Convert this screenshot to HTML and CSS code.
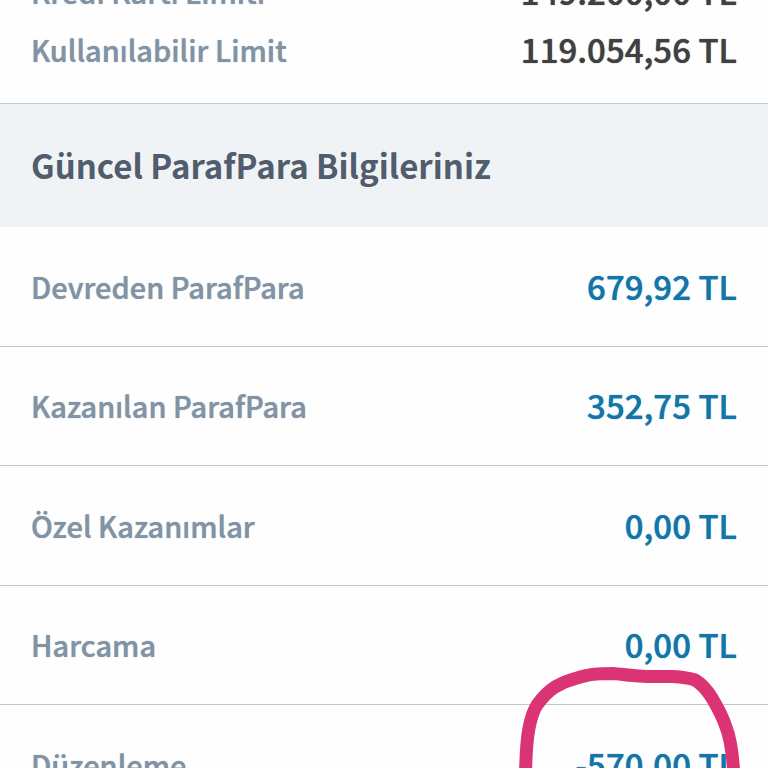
FILE: index.html
```html
<!DOCTYPE html>
<html lang="tr">
<head>
<meta charset="utf-8">
<meta name="viewport" content="width=device-width, initial-scale=1">
<title>ParafPara</title>
<link rel="stylesheet" href="styles.css">
</head>
<body>
<main class="screen">
  <dl class="limits">
    <div class="limit"><dt class="label">Kredi Kartı Limiti</dt><dd class="amount">149.200,00 TL</dd></div>
    <div class="limit"><dt class="label">Kullanılabilir Limit</dt><dd class="amount">119.054,56 TL</dd></div>
  </dl>
  <h2 class="heading">Güncel ParafPara Bilgileriniz</h2>
  <dl class="points">
    <div class="row"><dt class="label">Devreden ParafPara</dt><dd class="amount">679,92 TL</dd></div>
    <div class="row"><dt class="label">Kazanılan ParafPara</dt><dd class="amount">352,75 TL</dd></div>
    <div class="row"><dt class="label">Özel Kazanımlar</dt><dd class="amount">0,00 TL</dd></div>
    <div class="row"><dt class="label">Harcama</dt><dd class="amount">0,00 TL</dd></div>
    <div class="row marked"><dt class="label">Düzenleme</dt><dd class="amount">-570,00 TL</dd>
      <svg class="pen" width="268" height="144" viewBox="0 0 268 144" aria-hidden="true">
        <path d="M25.500 144 C25.500 120 26 104 29 88 C31 78 33 71 37 65 C42 58 47 52 55 47 C62 43 69 40 77 38 C84 36 90 34 97 34 C102 33.500 108 33.500 113 33.500 C120 34 126 35 133 35.500 C139 36 145 36.500 150 36.500 L173 36.500 C181 37 189 38 195 40 C202 44 207 50 212 58 C218 68 223 78 226 87 C231 100 233.500 115 234 144"/>
      </svg>
    </div>
  </dl>
</main>
</body>
</html>
```

FILE: styles.css
```css
body {
  margin: 0;
  background: #fefefe;
  font-family: "Noto Sans CJK JP", "Noto Sans", sans-serif;
  font-weight: 500;
}

.screen {
  height: 100vh;
  overflow: hidden;
}

dl, dd, h2 {
  margin: 0;
}

.limits {
  margin-top: -38px;
  padding-bottom: 25px;
  border-bottom: 1px solid #c6cacf;
}

.limit, .row {
  display: flex;
  align-items: center;
  justify-content: space-between;
  padding: 0 31px;
}

.limit {
  height: 58px;
}

.label, .amount {
  line-height: 40px;
  text-shadow: 0 0 1px currentColor;
}

.label {
  color: #8293a5;
  font-size: 29px;
}

.amount {
  color: #1476a8;
  font-size: 33px;
}

.limits .amount {
  color: #404042;
}

.heading {
  padding: 37px 31px 38px;
  background: #eff3f5;
  color: #515d6c;
  font-size: 33px;
  line-height: 48px;
  font-weight: 700;
}

.row {
  box-sizing: border-box;
  height: 119px;
  padding-bottom: 2px;
  border-bottom: 1px solid #c3c6c9;
}

.row:nth-child(odd) {
  height: 120px;
}

.marked {
  position: relative;
}

.pen {
  position: absolute;
  right: 0;
  top: -65px;
  fill: none;
  stroke: #db3474;
  stroke-width: 13px;
  stroke-linejoin: round;
}
```
